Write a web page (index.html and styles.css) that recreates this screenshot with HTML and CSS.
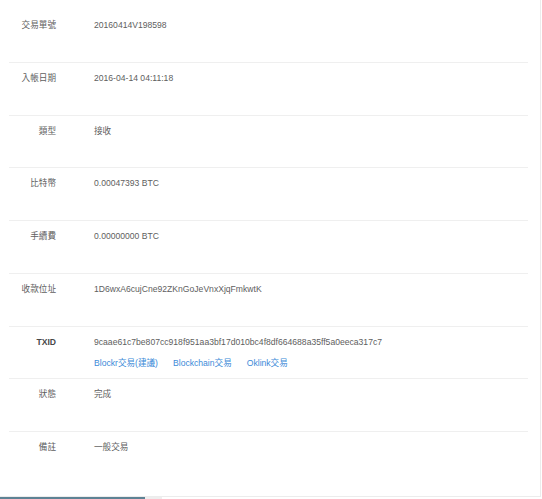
FILE: index.html
```html
<!DOCTYPE html>
<html lang="zh-Hant">
<head>
<meta charset="utf-8">
<link rel="stylesheet" href="styles.css">
</head>
<body>
<div class="card">
  <div class="list">
    <div class="row"><div class="label">交易單號</div><div class="value">20160414V198598</div></div>
    <div class="row"><div class="label">入帳日期</div><div class="value">2016-04-14 04:11:18</div></div>
    <div class="row"><div class="label">類型</div><div class="value">接收</div></div>
    <div class="row"><div class="label">比特幣</div><div class="value">0.00047393 BTC</div></div>
    <div class="row"><div class="label">手續費</div><div class="value">0.00000000 BTC</div></div>
    <div class="row"><div class="label">收款位址</div><div class="value">1D6wxA6cujCne92ZKnGoJeVnxXjqFmkwtK</div></div>
    <div class="row"><div class="label strong">TXID</div><div class="value">9caae61c7be807cc918f951aa3bf17d010bc4f8df664688a35ff5a0eeca317c7<div class="links"><a class="link">Blockr交易(建議)</a><a class="link">Blockchain交易</a><a class="link">Oklink交易</a></div></div></div>
    <div class="row"><div class="label">狀態</div><div class="value">完成</div></div>
    <div class="row last"><div class="label">備註</div><div class="value">一般交易</div></div>
  </div>
</div>
<div class="bar"><span class="bar-dark"></span><span class="bar-light"></span></div>
</body>
</html>
```
FILE: styles.css
```css
html, body {
  margin: 0;
  padding: 0;
  background: #ffffff;
}
body {
  font-family: "Liberation Sans", Arial, "Noto Sans CJK TC", sans-serif;
  font-size: 8.6px;
  color: #606060;
}
.card {
  width: 541px;
  height: 497px;
  box-sizing: border-box;
  border-right: 1px solid #ececec;
  border-bottom: 1px solid #ececec;
  padding: 10px 12px 0 9px;
}
.row {
  display: flex;
  box-sizing: border-box;
  height: 52.75px;
  padding-top: 8px;
  border-bottom: 1px solid #efefef;
  line-height: 14px;
}
.row.last {
  border-bottom: none;
}
.label {
  width: 47px;
  text-align: right;
  flex-shrink: 0;
  color: #606060;
}
.label.strong {
  font-weight: bold;
  color: #484848;
}
.value {
  margin-left: 38px;
  color: #606060;
}
.links {
  display: flex;
  gap: 15px;
  margin-top: 7px;
}
.link {
  color: #3b8ad8;
  text-decoration: none;
}
.bar {
  display: flex;
  height: 2px;
}
.bar-dark {
  width: 145px;
  background: #5d8294;
}
.bar-light {
  width: 17px;
  background: #eeeeee;
}
```
